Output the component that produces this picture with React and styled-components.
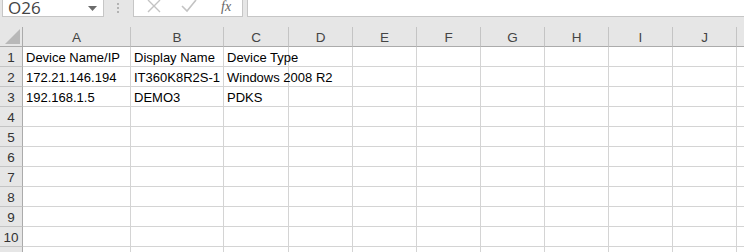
import React from 'react';
import styled, { createGlobalStyle } from 'styled-components';

const GlobalStyle = createGlobalStyle`
    html, body {
        margin: 0;
        padding: 0;
        background: #ffffff;
        overflow: hidden;
    }
`;

const columns = [
    { key: 'A', width: 108 },
    { key: 'B', width: 93 },
    { key: 'C', width: 65 },
    { key: 'D', width: 64 },
    { key: 'E', width: 64 },
    { key: 'F', width: 64 },
    { key: 'G', width: 64 },
    { key: 'H', width: 64 },
    { key: 'I', width: 64 },
    { key: 'J', width: 64 },
    { key: 'K', width: 64 },
];

const data = [
    ['Device Name/IP', 'Display Name', 'Device Type'],
    ['172.21.146.194', 'IT360K8R2S-1', 'Windows 2008 R2'],
    ['192.168.1.5', 'DEMO3', 'PDKS'],
];

const rowCount = 11;
const template = `23px ${columns.map((c) => `${c.width}px`).join(' ')}`;

const App = () => (
    <Sheet>
        <GlobalStyle />
        <FormulaBar>
            <NameBox>
                <NameText>O26</NameText>
                <svg width="9" height="5" viewBox="0 0 9 5">
                    <path d="M0 0 L9 0 L4.5 5 Z" fill="#6b6b6b" />
                </svg>
            </NameBox>
            <Grip>
                <span />
                <span />
                <span />
            </Grip>
            <ButtonGroup>
                <svg width="14" height="14" viewBox="0 0 14 14">
                    <path d="M1 1 L13 13 M13 1 L1 13" stroke="#c3c3c3" strokeWidth="1.4" fill="none" />
                </svg>
                <svg width="16" height="14" viewBox="0 0 16 14">
                    <path d="M1 7 L6 12 L15 1" stroke="#c3c3c3" strokeWidth="1.6" fill="none" />
                </svg>
                <Fx>fx</Fx>
            </ButtonGroup>
            <FormulaInput />
        </FormulaBar>
        <Grid style={{ gridTemplateColumns: template }}>
            <Corner>
                <svg width="15" height="15" viewBox="0 0 15 15">
                    <path d="M15 0 L15 15 L0 15 Z" fill="#b8b8b8" />
                </svg>
            </Corner>
            {columns.map((c) => (
                <ColHeader key={c.key}>{c.key}</ColHeader>
            ))}
            {Array.from({ length: rowCount }, (_, r) => (
                <React.Fragment key={r}>
                    <RowHeader>{r + 1}</RowHeader>
                    {columns.map((c, ci) => (
                        <Cell key={c.key}>{(data[r] && data[r][ci]) || ''}</Cell>
                    ))}
                </React.Fragment>
            ))}
        </Grid>
    </Sheet>
);

export default App;

const Sheet = styled.div`
    width: 744px;
    height: 252px;
    overflow: hidden;
    background: #e6e6e6;
    font-family: "Liberation Sans", Arial, sans-serif;
`;

const FormulaBar = styled.div`
    display: flex;
    align-items: flex-start;
    height: 27px;
    background: #e6e6e6;
`;

const NameBox = styled.div`
    display: flex;
    align-items: center;
    justify-content: space-between;
    box-sizing: border-box;
    width: 102px;
    height: 17px;
    margin-left: 2px;
    padding: 0 6px 0 5px;
    background: #ffffff;
    border: 1px solid #c6c6c6;
    border-top: none;
`;

const NameText = styled.span`
    font-family: "Open Sans", "Liberation Sans", sans-serif;
    font-size: 17px;
    color: #444444;
    line-height: 15px;
    margin-top: -2px;
`;

const Grip = styled.div`
    display: flex;
    flex-direction: column;
    gap: 2px;
    margin: 3px 0 0 13px;
    width: 2px;

    span {
        width: 2px;
        height: 2px;
        background: #b3b3b3;
    }
`;

const ButtonGroup = styled.div`
    display: flex;
    align-items: center;
    gap: 20px;
    box-sizing: border-box;
    width: 110px;
    height: 17px;
    margin-left: 14px;
    padding: 0 0 0 13px;
    background: #ffffff;
    border: 1px solid #c6c6c6;
    border-top: none;

    svg {
        margin-top: -4px;
    }
`;

const Fx = styled.span`
    font-family: "Liberation Serif", serif;
    font-style: italic;
    font-size: 14px;
    line-height: 14px;
    color: #666666;
    margin-top: -2px;
    margin-left: 4px;
`;

const FormulaInput = styled.div`
    flex: 1;
    height: 17px;
    margin-left: 4px;
    box-sizing: border-box;
    background: #ffffff;
    border: 1px solid #c6c6c6;
    border-top: none;
    border-right: none;
`;

const Grid = styled.div`
    display: grid;
    grid-auto-rows: 20px;
    background: #ffffff;
`;

const HeaderBase = styled.div`
    box-sizing: border-box;
    display: flex;
    align-items: center;
    justify-content: center;
    background: #e6e6e6;
    color: #444444;
    font-size: 13.5px;
`;

const Corner = styled(HeaderBase)`
    align-items: flex-end;
    justify-content: flex-end;
    padding: 0 2px 2px 0;
    border-right: 1px solid #ababab;
    border-bottom: 1px solid #ababab;
`;

const ColHeader = styled(HeaderBase)`
    border-right: 1px solid #c4c4c4;
    border-bottom: 1px solid #ababab;
    padding-top: 1px;
`;

const RowHeader = styled(HeaderBase)`
    border-right: 1px solid #ababab;
    border-bottom: 1px solid #c4c4c4;
    color: #333333;
    padding-top: 1px;
`;

const Cell = styled.div`
    box-sizing: border-box;
    display: flex;
    align-items: center;
    padding: 1px 0 0 3px;
    border-right: 1px solid #d4d4d4;
    border-bottom: 1px solid #d4d4d4;
    font-size: 13px;
    color: #000000;
    white-space: nowrap;
    overflow: visible;
`;
